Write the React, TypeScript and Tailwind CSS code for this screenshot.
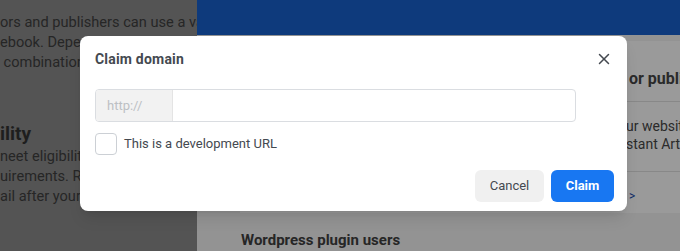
import { X } from 'lucide-react';

const font = { fontFamily: 'Roboto, "Liberation Sans", Arial, sans-serif' };

export default function App() {
  return (
    <div className="relative w-[680px] h-[251px] overflow-hidden" style={font}>
      {/* page behind the overlay */}
      <div className="flex h-full">
        <div className="w-[197px] shrink-0 bg-[#545454] text-[#262626] overflow-hidden whitespace-nowrap">
          <div className="pt-[12px] text-[14.6px] leading-[20px]">
            <p>ors and publishers can use a va</p>
            <p>ebook. Depending on</p>
            <p>&nbsp;combinations of</p>
          </div>
          <p className="mt-[50px] text-[19px] font-bold leading-[24px] text-[#1e1e1e]">ility</p>
          <div className="text-[14.6px] leading-[20px]">
            <p>neet eligibility and</p>
            <p>uirements. Review</p>
            <p>ail after your site</p>
          </div>
        </div>

        <div className="flex-1 flex flex-col bg-[#939393]">
          <div className="h-[35px] bg-[#0e3a7c] shrink-0" />
          <div className="ml-[43px] mt-[6px] h-[173px] bg-[#9a9a9a] text-[#2a2a2a] whitespace-nowrap overflow-hidden">
            <div className="h-[61px] border-b border-[#888] pl-[389px] pt-[28px] text-[16px] font-bold leading-[20px]">
              or publisher?
            </div>
            <div className="h-[70px] border-b border-[#888] pl-[386px] pt-[15px] text-[14px] leading-[18px]">
              <p>ur website</p>
              <p>stant Articles</p>
            </div>
            <div className="pl-[389px] pt-[15px] text-[12px] text-[#0e2a66]">&gt;</div>
          </div>
          <p className="ml-[44px] mt-[16px] text-[15px] font-bold text-[#262626] leading-[22px]">
            Wordpress plugin users
          </p>
        </div>
      </div>

      {/* dialog */}
      <div className="absolute left-[80px] top-[36px] w-[547px] h-[175px] rounded-[8px] bg-white shadow-lg">
        <div className="flex items-center justify-between pl-[15px] pr-[16px] pt-[14px]">
          <h2 className="text-[14px] font-bold text-[#444950] leading-[18px] tracking-[0.2px]">Claim domain</h2>
          <button className="text-[#444950] -mr-[2px]">
            <X size={18} strokeWidth={2} />
          </button>
        </div>

        <div className="mx-[15px] mt-[21px] w-[481px] h-[33px] flex border border-[#dadde1] rounded-[4px] overflow-hidden">
          <div className="w-[77px] bg-[#f2f2f2] border-r border-[#e4e4e4] flex items-center pl-[11px] text-[13px] text-[#bcc0c4]">
            http://
          </div>
          <input className="flex-1 outline-none px-2 text-[13px]" />
        </div>

        <label className="flex items-center gap-[7px] ml-[15px] mt-[11px]">
          <span className="w-[22px] h-[22px] rounded-[4px] border border-[#ccd0d5] bg-white" />
          <span className="text-[13px] text-[#444950]">This is a development URL</span>
        </label>

        <div className="flex justify-end gap-[7px] pr-[13px] mt-[15px]">
          <button className="w-[69px] h-[32px] rounded-[6px] bg-[#f0f0f0] text-[13px] text-[#444950]">Cancel</button>
          <button className="w-[63px] h-[32px] rounded-[6px] bg-[#1877f2] text-[13px] font-bold text-white">Claim</button>
        </div>
      </div>
    </div>
  );
}
